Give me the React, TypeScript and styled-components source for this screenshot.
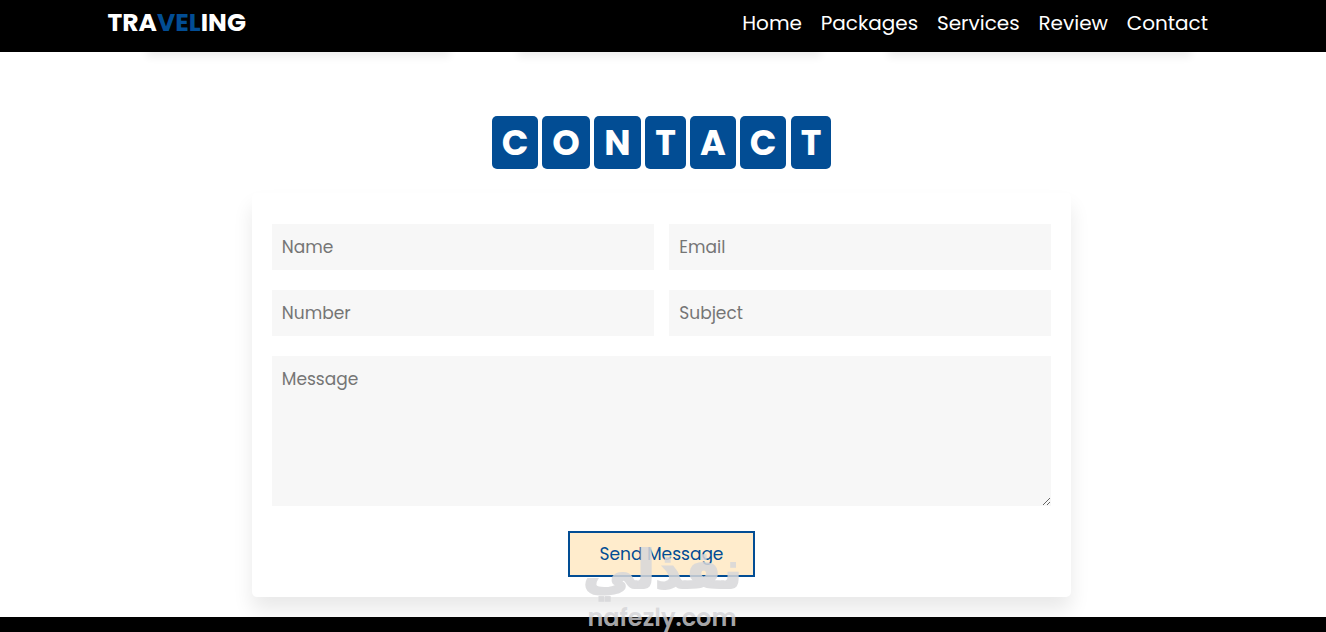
import styled, { createGlobalStyle } from "styled-components";

const GlobalStyle = createGlobalStyle`
  * {
    margin: 0;
    padding: 0;
    box-sizing: border-box;
    font-family: Poppins, Inter, "Noto Sans", sans-serif;
  }

  body {
    background-color: #fff;
    overflow: hidden;
  }
`;

const menus = ["Home", "Packages", "Services", "Review", "Contact"];

const letters = [
  { char: "C", width: 46, gap: 4 },
  { char: "O", width: 48, gap: 4 },
  { char: "N", width: 47, gap: 4 },
  { char: "T", width: 41, gap: 4 },
  { char: "A", width: 46, gap: 4 },
  { char: "C", width: 46, gap: 5 },
  { char: "T", width: 40, gap: 0 },
];

function App() {
  return (
    <Page>
      <GlobalStyle />
      <Header>
        <Logo>
          TRA<span>VEL</span>ING
        </Logo>
        <Navbar>
          {menus.map((menu) => (
            <NavLink href="#" key={menu}>
              {menu}
            </NavLink>
          ))}
        </Navbar>
      </Header>
      <CardBottoms>
        <CardBottom />
        <CardBottom />
        <CardBottom />
      </CardBottoms>
      <Contact>
        <Heading>
          {letters.map((letter, idx) => (
            <Letter key={idx} $width={letter.width} $gap={letter.gap}>
              {letter.char}
            </Letter>
          ))}
        </Heading>
        <Form>
          <InputBox>
            <Input type="text" placeholder="Name" />
            <Input type="email" placeholder="Email" />
            <Input type="number" placeholder="Number" />
            <Input type="text" placeholder="Subject" />
          </InputBox>
          <Message placeholder="Message" />
          <SendButton type="button">Send Message</SendButton>
        </Form>
      </Contact>
      <Footer />
      <Watermark>
        <ArabicName lang="ar" dir="rtl">نفذلي</ArabicName>
        <SiteName>nafezly.com</SiteName>
      </Watermark>
    </Page>
  );
}

export default App;

const Page = styled.div`
  position: relative;
  display: flex;
  flex-direction: column;
  height: 632px;
  overflow: hidden;
`;

const Header = styled.header`
  z-index: 1;
  display: flex;
  flex: none;
  justify-content: space-between;
  height: 52px;
  padding: 0 118px 0 107.5px;
  background-color: #000;
`;

const Logo = styled.a`
  color: #fff;
  font-size: 25px;
  font-weight: 700;
  line-height: 45px;

  > span {
    color: #024d94;
  }
`;

const Navbar = styled.nav`
  display: flex;
  gap: 18.8px;
`;

const NavLink = styled.a`
  color: #fff;
  font-size: 20px;
  line-height: 46px;
  text-decoration: none;
  white-space: nowrap;
`;

/* lower edges of the cards that are scrolled under the header */
const CardBottoms = styled.div`
  display: flex;
  flex: none;
  justify-content: space-between;
  height: 0;
  padding: 0 135px 0 147px;
`;

const CardBottom = styled.div`
  width: 303px;
  height: 40px;
  margin-top: -40px;
  box-shadow: 0 5px 8px rgba(0, 0, 0, 0.07);
`;

const Contact = styled.section`
  display: flex;
  flex: none;
  flex-direction: column;
  align-items: center;
  height: 565px;
  padding: 64px 3px 0 0;
`;

const Heading = styled.h1`
  display: flex;
  color: #fff;
  font-size: 35px;
  font-weight: 700;
  line-height: 53px;
`;

const Letter = styled.span<{ $width: number; $gap: number }>`
  width: ${(props) => props.$width}px;
  height: 53px;
  margin-right: ${(props) => props.$gap}px;
  border-radius: 5px;
  background-color: #024d94;
  text-align: center;
`;

const Form = styled.form`
  display: flex;
  flex-direction: column;
  align-items: center;
  width: 819.4px;
  height: 404px;
  margin-top: 24px;
  padding: 31px 20px 20px;
  border-radius: 5px;
  box-shadow: 0 13px 20px rgba(0, 0, 0, 0.09);
`;

const InputBox = styled.div`
  display: grid;
  grid-template-columns: 49% 49%;
  justify-content: space-between;
  row-gap: 20px;
  width: 100%;
`;

const Input = styled.input`
  height: 46px;
  padding: 0 10px;
  border: none;
  outline: none;
  background-color: #f7f7f7;
  font-size: 17px;

  &::placeholder {
    color: #757575;
  }
`;

const Message = styled.textarea`
  width: 100%;
  height: 150px;
  margin-top: 20px;
  padding: 10px;
  border: none;
  outline: none;
  background-color: #f7f7f7;
  font-size: 17px;
  line-height: 26px;
  resize: vertical;

  &::placeholder {
    color: #757575;
  }
`;

const SendButton = styled.button`
  width: 187px;
  height: 46px;
  margin-top: 25px;
  border: 2px solid #024d94;
  background-color: #ffeccc;
  color: #024d94;
  font-size: 17px;
  white-space: nowrap;
`;

const Footer = styled.footer`
  z-index: 1;
  height: 15px;
  background-color: #000;
`;

const Watermark = styled.div`
  position: absolute;
  top: 540px;
  left: 582px;
  z-index: 2;
  width: 160px;
  color: rgba(211, 211, 214, 0.8);
  text-align: center;
  white-space: nowrap;
  pointer-events: none;
`;

const ArabicName = styled.div`
  height: 65px;
  padding-left: 4px;
  font-family: "DejaVu Sans", sans-serif;
  font-size: 52px;
  font-weight: 700;
  line-height: 60px;
  -webkit-text-stroke: 2px #d8d8da;
  color: #d8d8da;
  opacity: 0.85;
`;

const SiteName = styled.div`
  height: 25px;
  font-size: 24px;
  font-weight: 600;
  line-height: 25px;
`;
